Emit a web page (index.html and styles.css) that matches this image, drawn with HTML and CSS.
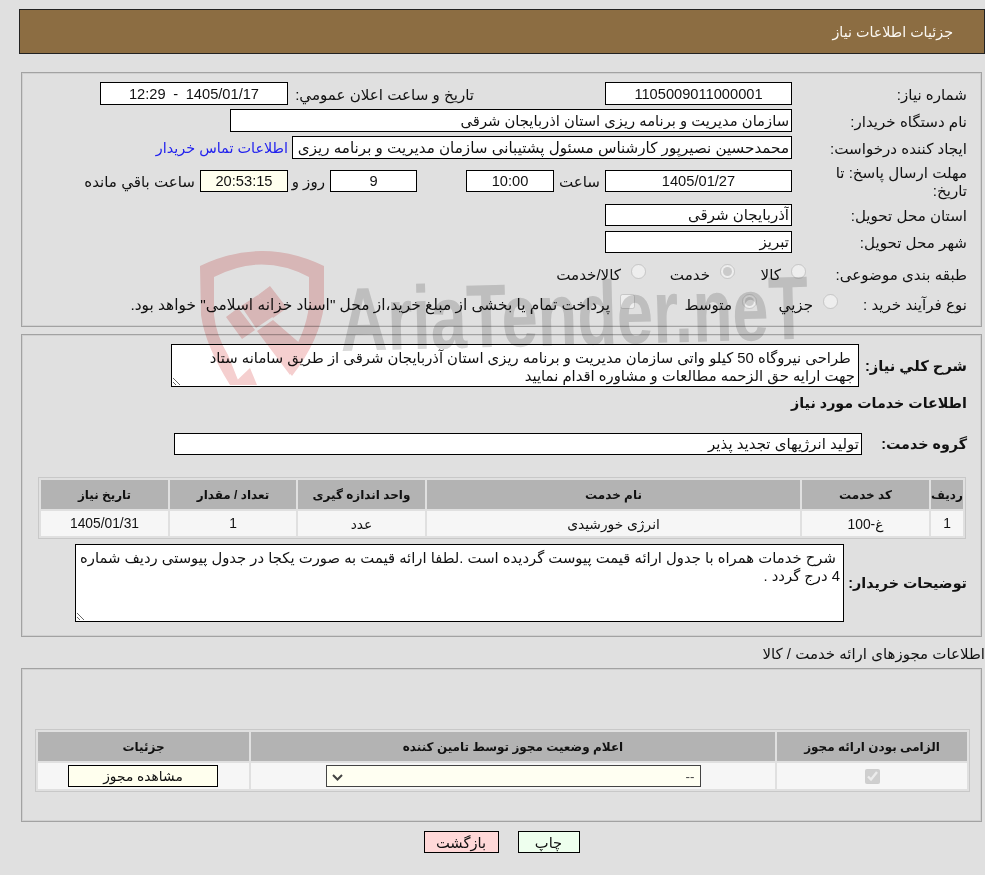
FILE: index.html
```html
<!DOCTYPE html>
<html lang="fa" dir="rtl">
<head>
<meta charset="utf-8">
<title>جزئیات اطلاعات نیاز</title>
<link rel="stylesheet" href="styles.css">
</head>
<body>
<header class="page-title">جزئیات اطلاعات نیاز</header>

<section class="panel panel-main">
  <div class="row">
    <label class="lbl">شماره نیاز:</label>
    <input class="field w187 center" readonly value="1105009011000001">
    <label class="lbl-announce">تاریخ و ساعت اعلان عمومي:</label>
    <input class="field w188 center" readonly value="1405/01/17 - 12:29">
  </div>
  <div class="row">
    <label class="lbl">نام دستگاه خریدار:</label>
    <input class="field w562" readonly value="سازمان مدیریت و برنامه ریزی استان اذربایجان شرقی">
  </div>
  <div class="row">
    <label class="lbl">ایجاد کننده درخواست:</label>
    <input class="field w500" readonly value="محمدحسین نصیرپور کارشناس مسئول پشتیبانی سازمان مدیریت و برنامه ریزی">
    <a class="contact" href="#">اطلاعات تماس خریدار</a>
  </div>
  <div class="row row-deadline">
    <label class="lbl lbl-two">مهلت ارسال پاسخ: تا تاریخ:</label>
    <input class="field short w187 center" readonly value="1405/01/27">
    <span class="txt-hour">ساعت</span>
    <input class="field short w88 center" readonly value="10:00">
    <input class="field short w87 center gap-days" readonly value="9">
    <span class="txt-day">روز و</span>
    <input class="field short w88 center remain" readonly value="20:53:15">
    <span class="txt-left">ساعت باقي مانده</span>
  </div>
  <div class="row row-place">
    <label class="lbl">استان محل تحویل:</label>
    <input class="field short w187" readonly value="آذربایجان شرقی">
  </div>
  <div class="row row-city">
    <label class="lbl">شهر محل تحویل:</label>
    <input class="field short w187" readonly value="تبریز">
  </div>
  <div class="row row-cat">
    <label class="lbl lbl-cat">طبقه بندی موضوعی:</label>
    <span class="opt opt-71"><input type="radio" name="cat" disabled><span>کالا</span></span>
    <span class="opt opt-89"><input type="radio" name="cat" disabled checked><span>خدمت</span></span>
    <span class="opt"><input type="radio" name="cat" disabled><span>کالا/خدمت</span></span>
  </div>
  <div class="row row-proc">
    <label class="lbl lbl-proc">نوع فرآیند خرید :</label>
    <span class="opt opt-81"><input type="radio" name="proc" disabled><span>جزيي</span></span>
    <span class="opt opt-122"><input type="radio" name="proc" disabled checked><span>متوسط</span></span>
    <span class="opt opt-long"><input type="checkbox" disabled><span>پرداخت تمام یا بخشی از مبلغ خرید،از محل "اسناد خزانه اسلامی" خواهد بود.</span></span>
  </div>
</section>

<section class="panel panel-need">
  <div class="row-summary">
    <label class="blbl">شرح كلي نياز:</label>
    <textarea class="area area-summary" readonly> طراحی نیروگاه 50 کیلو واتی سازمان مدیریت و برنامه ریزی استان آذربایجان شرقی از طریق سامانه ستاد جهت ارایه حق الزحمه مطالعات و مشاوره اقدام نمایید</textarea>
  </div>
  <h2 class="blbl sub">اطلاعات خدمات مورد نياز</h2>
  <div class="row-group">
    <label class="blbl">گروه خدمت:</label>
    <input class="field short w688" readonly value="تولید انرژیهای تجدید پذیر">
  </div>
  <table class="grid grid-services">
    <thead>
      <tr><th class="c1">ردیف</th><th class="c2">کد خدمت</th><th class="c3">نام خدمت</th><th class="c4">واحد اندازه گیری</th><th class="c5">تعداد / مقدار</th><th class="c6">تاریخ نیاز</th></tr>
    </thead>
    <tbody>
      <tr><td>1</td><td>غ-100</td><td>انرژی خورشیدی</td><td>عدد</td><td>1</td><td>1405/01/31</td></tr>
    </tbody>
  </table>
  <div class="row-notes">
    <label class="blbl">توضیحات خریدار:</label>
    <textarea class="area area-notes" readonly> شرح خدمات همراه با جدول ارائه قیمت پیوست گردیده است .لطفا ارائه قیمت به صورت یکجا در جدول پیوستی ردیف شماره 4 درج گردد .</textarea>
  </div>
</section>

<h3 class="section-caption">اطلاعات مجوزهای ارائه خدمت / کالا</h3>
<section class="panel panel-permit">
  <table class="grid grid-permit">
    <thead>
      <tr><th class="p1">الزامی بودن ارائه مجوز</th><th class="p2">اعلام وضعیت مجوز توسط تامین کننده</th><th class="p3">جزئیات</th></tr>
    </thead>
    <tbody>
      <tr>
        <td><input type="checkbox" class="must" disabled checked></td>
        <td><select class="status"><option>--</option></select></td>
        <td><button class="view" type="button">مشاهده مجوز</button></td>
      </tr>
    </tbody>
  </table>
</section>

<div class="actions">
  <button class="btn btn-print" type="button">چاپ</button>
  <button class="btn btn-back" type="button">بازگشت</button>
</div>

<svg class="watermark" viewBox="195 245 620 140" width="620" height="140" aria-hidden="true">
  <g class="wm-red">
    <path d="M200 266Q262 236 324 266L324 305Q320 340 292 376L284 366Q306 335 309 305L309 277Q262 252 214 277L214 315Q216 335 228 355L240 385L230 385Q205 345 201 315Z"/>
    <path d="M226 317L238 308L255 330L242 339Z"/>
    <path d="M241 306L258 295L274 316L256 328Z"/>
    <path d="M258 295L270 286L287 308L273 318Z"/>
    <path d="M257 331L273 320L303 346L290 375Z"/>
    <path d="M250 368L232 385L257 385Z"/>
  </g>
  <text class="wm-text" x="341" y="351" textLength="468" lengthAdjust="spacingAndGlyphs" transform="rotate(-1.5 341 351)" direction="ltr">AriaTender.neT</text>
</svg>
</body>
</html>
```

FILE: styles.css
```css
* { box-sizing: border-box; }
html, body { margin: 0; padding: 0; }
body {
  position: relative;
  width: 985px;
  height: 875px;
  overflow: hidden;
  background: #e0e0e0;
  color: #111;
  font-family: "Liberation Sans", "DejaVu Sans", sans-serif;
  font-size: 15.1px;
}

.page-title {
  height: 45px;
  margin: 9px 0 0 19px;
  padding: 0 31px 0 0;
  display: flex;
  align-items: center;
  border: 1px solid #222;
  background: #8c6d42;
  color: #fbf8f2;
  font-size: 14.3px;
}

.panel {
  margin-left: 21px;
  margin-right: 3px;
  border: 1px solid #a2a2a2;
  box-shadow: inset -1px -1px 0 #d0d0d0, inset 1px 1px 0 #d0d0d0;
}
.panel-main { height: 255px; margin-top: 18px; padding: 9px 14px 0 0; }
.panel-need { height: 303px; margin-top: 7px; padding: 9px 14px 0 0; }
.panel-permit { height: 154px; padding: 60px 0 0 0; }

.row { display: flex; align-items: center; height: 23px; margin-bottom: 4px; }
.lbl { flex: 0 0 175px; padding-top: 2px; }
.lbl-two { line-height: 18px; padding-left: 20px; }
.lbl-cat { flex-basis: 161px; }
.lbl-proc { flex-basis: 129px; }
.lbl-announce { margin-right: 131px; width: 181px; margin-left: 5px; padding-top: 2px; white-space: nowrap; }

.row-deadline { margin-top: 11px; height: 22px; margin-bottom: 12px; }
.row-place { height: 22px; margin-bottom: 5px; }
.row-city { height: 22px; margin-bottom: 10px; }
.row-cat { height: 21px; margin-bottom: 9px; }
.row-proc { height: 21px; margin-bottom: 0; }

.field {
  height: 23px;
  padding: 0 2px;
  border: 1px solid #000;
  background: #fff;
  color: #111;
  font: inherit;
  font-size: 15px;
  border-radius: 0;
  outline: none;
}
.short { height: 22px; }
.center { text-align: center; font-size: 14.667px; word-spacing: 3.5px; }
.w87 { width: 87px; }
.w88 { width: 88px; }
.w187 { width: 187px; }
.w188 { width: 188px; }
.w500 { width: 500px; font-size: 15.15px; }
.w562 { width: 562px; font-size: 14.75px; }
.w688 { width: 688px; flex: none; }
.remain { background: #ffffee; }
.gap-days { margin-right: 49px; }

.contact { margin-right: 4px; color: #2222ee; text-decoration: none; white-space: nowrap; font-size: 14.4px; }
.txt-hour { width: 51px; padding-right: 5px; padding-top: 2px; }
.txt-day { width: 42px; padding-right: 5px; padding-top: 2px; white-space: nowrap; }
.txt-left { padding-right: 5px; padding-top: 2px; white-space: nowrap; }

.opt { display: flex; align-items: center; white-space: nowrap; }
.opt input { width: 15px; height: 15px; margin: -4px 0 0 10px; flex: none; }
.opt span { margin-top: 2px; }
.opt-71 { width: 71px; }
.opt-89 { width: 89px; }
.opt-81 { width: 81px; }
.opt-122 { width: 122px; }
.opt-long { font-size: 15.4px; }

.blbl { font-size: 14.3px; font-weight: bold; color: #111; white-space: nowrap; }
.row-summary .blbl { font-size: 14.7px; }

.area {
  display: block;
  flex: none;
  margin: 0;
  padding: 5px 3px 2px 2px;
  border: 1px solid #000;
  background: #fff;
  color: #111;
  font: inherit;
  font-size: 14.82px;
  line-height: 17.5px;
  border-radius: 0;
  outline: none;
  white-space: pre-wrap;
  overflow: hidden;
}
.row-summary { display: flex; align-items: center; justify-content: space-between; height: 43px; margin-left: 149px; }
.area-summary { width: 688px; height: 43px; padding-left: 18px; }
.sub { margin: 0; height: 18px; margin-top: 7px; line-height: 18px; }
.row-group { display: flex; align-items: center; justify-content: space-between; margin: 21px 0 0 152px; height: 22px; }
.row-notes { display: flex; align-items: center; justify-content: space-between; margin: 5px 0 0 53px; height: 78px; }
.area-notes { width: 769px; height: 78px; }

.grid {
  border-collapse: separate;
  border-spacing: 2px;
  border: 1px solid #c8c8c8;
  padding: 0;
  table-layout: fixed;
}
.grid th {
  background: #b3b3b3;
  font-size: 12px;
  font-weight: bold;
  padding: 0;
  color: #111;
}
.grid td {
  background: #f6f6f6;
  text-align: center;
  padding: 0;
  font-size: 13.8px;
}
.grid-services { width: 928px; margin: 22px 1px 0 0; height: 61px; }
.grid-services th { height: 29px; }
.grid-services td { height: 25px; }
.c1 { width: 32px; }
.c2 { width: 127px; }
.c3 { width: 373px; }
.c4 { width: 127px; }
.c5 { width: 126px; }
.c6 { width: 127px; }

.section-caption {
  margin: 8px 0 0 0;
  height: 23px;
  line-height: 18px;
  font-size: 15px;
  font-weight: normal;
}

.grid-permit { width: 933px; margin-right: 11px; }
.grid-permit th { height: 29px; }
.grid-permit td { height: 26px; }
.p1 { width: 190px; }
.p2 { width: 524px; }
.p3 { width: 211px; }

.must { width: 15px; height: 15px; margin: 0; vertical-align: middle; }
.status {
  display: block;
  width: 375px;
  height: 22px;
  margin: 0 auto;
  padding: 0 5px 0 24px;
  border: 1px solid #444;
  border-radius: 0;
  appearance: none;
  background: #fffff2 url("data:image/svg+xml,%3Csvg xmlns='http://www.w3.org/2000/svg' width='11' height='7'%3E%3Cpath d='M1 1l4.5 4.5L10 1' fill='none' stroke='%23444' stroke-width='2'/%3E%3C/svg%3E") no-repeat 5px 8px;
  color: #444;
  font: inherit;
  font-size: 13.333px;
}
.view {
  display: block;
  width: 150px;
  height: 22px;
  margin: 0 31px 0 30px;
  padding: 0;
  border: 1px solid #000;
  background: #ffffee;
  color: #111;
  font: inherit;
  border-radius: 0;
}

.actions { display: flex; justify-content: center; gap: 19px; margin: 9px 3px 0 21px; }
.btn {
  height: 22px;
  padding: 0;
  border: 1px solid #000;
  border-radius: 0;
  color: #111;
  font: inherit;
  font-size: 14.667px;
}
.btn-print { width: 62px; background: #eeffee; }
.btn-back { width: 75px; background: #ffd8d8; }

.watermark {
  position: absolute;
  left: 195px;
  top: 245px;
  mix-blend-mode: multiply;
  pointer-events: none;
}
.wm-red { fill: #f5cfcf; }
.wm-text {
  fill: #d9d9d9;
  font-family: "Liberation Sans", sans-serif;
  font-weight: bold;
  font-size: 90px;
}
```
